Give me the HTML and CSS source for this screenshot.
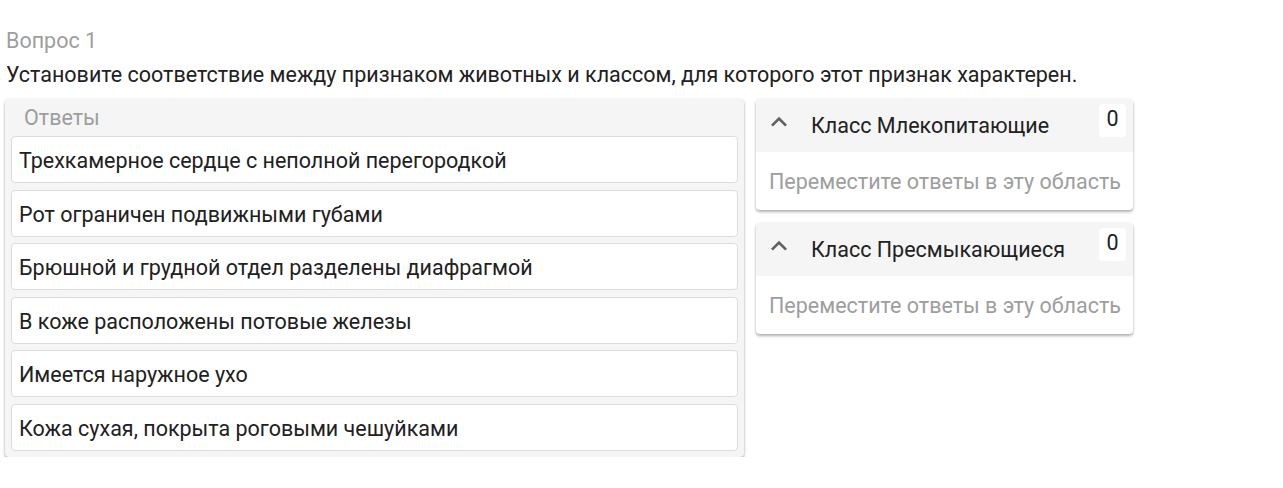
FILE: index.html
```html
<!DOCTYPE html>
<html lang="ru">
<head>
  <meta charset="UTF-8" />
  <title>Вопрос 1</title>
  <link rel="stylesheet" href="styles.css">
</head>
<body>

  <div class="question">
    <div class="q-number">Вопрос 1</div>
    <div class="q-text">Установите соответствие между признаком животных и классом, для которого этот признак характерен.</div>

    <div class="match">
      <div class="answers">
        <div class="answers-title">Ответы</div>
        <div class="answer">Трехкамерное сердце с неполной перегородкой</div>
        <div class="answer">Рот ограничен подвижными губами</div>
        <div class="answer">Брюшной и грудной отдел разделены диафрагмой</div>
        <div class="answer">В коже расположены потовые железы</div>
        <div class="answer">Имеется наружное ухо</div>
        <div class="answer">Кожа сухая, покрыта роговыми чешуйками</div>
      </div>

      <div class="groups">
        <div class="group">
          <div class="group-head">
            <svg class="chevron" viewBox="0 0 24 24"><path d="M12 8l-6 6 1.41 1.41L12 10.83l4.59 4.58L18 14z"/></svg>
            <span class="group-name">Класс Млекопитающие</span>
            <span class="count">0</span>
          </div>
          <div class="group-body">Переместите ответы в эту область</div>
        </div>
        <div class="group">
          <div class="group-head">
            <svg class="chevron" viewBox="0 0 24 24"><path d="M12 8l-6 6 1.41 1.41L12 10.83l4.59 4.58L18 14z"/></svg>
            <span class="group-name">Класс Пресмыкающиеся</span>
            <span class="count">0</span>
          </div>
          <div class="group-body">Переместите ответы в эту область</div>
        </div>
      </div>
    </div>
  </div>

</body>
</html>
```

FILE: styles.css
```css
body {
  margin: 0;
  font-family: Roboto, "Liberation Sans", sans-serif;
  font-size: 21.5px;
  color: #212121;
  background: #fff;
}
.question { padding: 28px 0 0 6px; }
.q-number { color: #9e9e9e; line-height: 26px; }
.q-text { line-height: 26px; margin-top: 8px; }

.match {
  display: flex;
  align-items: flex-start;
  gap: 12px;
  margin-top: 11px;
  margin-left: -1px;
}
.answers {
  width: 727px;
  padding: 6px;
  background: #f5f5f5;
  border-radius: 4px;
  box-shadow: 0 2px 3px rgba(0, 0, 0, 0.32), 0 0 2px rgba(0, 0, 0, 0.08);
  display: flex;
  flex-direction: column;
  gap: 6.5px;
}
.answers-title {
  color: #9e9e9e;
  padding-left: 13px;
  line-height: 26px;
  margin-bottom: -1.5px;
}
.answer {
  background: #fff;
  border: 1px solid #dcdcdc;
  border-radius: 4px;
  padding: 0 7px;
  height: 45px;
  line-height: 47px;
}

.groups {
  width: 377px;
  display: flex;
  flex-direction: column;
  gap: 13px;
}
.group {
  border-radius: 4px;
  background: #fff;
  overflow: hidden;
  box-shadow: 0 2px 3px rgba(0, 0, 0, 0.3), 0 0 2px rgba(0, 0, 0, 0.08);
}
.group-head {
  background: #f5f5f5;
  height: 53px;
  display: flex;
  align-items: center;
  padding: 0 7px;
}
.chevron { width: 32px; height: 32px; fill: #616161; margin-top: -7px; }
.group-name { margin-left: 16px; flex: 1; }
.count {
  background: #fff;
  border-radius: 4px;
  width: 27px;
  height: 33px;
  line-height: 30px;
  text-align: center;
  align-self: flex-start;
  margin-top: 5px;
}
.group-body {
  height: 58px;
  line-height: 60px;
  padding-left: 13px;
  color: #9e9e9e;
}
```
